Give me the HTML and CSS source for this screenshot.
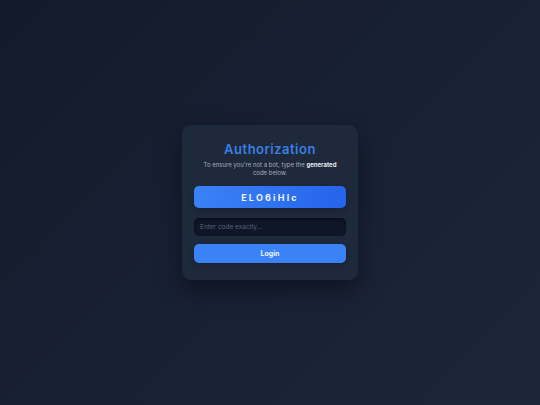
FILE: index.html
```html
<!DOCTYPE html>
<html lang="en">
<head>
<meta charset="utf-8">
<title>Authorization</title>
<link rel="stylesheet" href="styles.css">
</head>
<body>
<main class="page">
  <section class="card">
    <h1 class="title">Authorization</h1>
    <p class="subtitle">To ensure you're not a bot, type the <strong>generated</strong> code below.</p>
    <div class="code">ELO6iHlc</div>
    <input class="field" type="text" placeholder="Enter code exactly...">
    <button class="login" type="button">Login</button>
  </section>
</main>
</body>
</html>
```
FILE: styles.css
```css
* { box-sizing: border-box; }
html, body { margin: 0; height: 100%; }
body {
  background: linear-gradient(135deg, #141a2a 0%, #182034 50%, #1d2639 100%);
  font-family: Inter, "Noto Sans", sans-serif;
}
.page {
  height: 100%;
  display: flex;
  align-items: center;
  justify-content: center;
}
.card {
  width: 176px;
  padding: 16px 12px 17px;
  background: #1e293b;
  border-radius: 9px;
  box-shadow: 0 10px 22px rgba(5, 9, 18, 0.55);
  display: flex;
  flex-direction: column;
  align-items: stretch;
}
.title {
  margin: 0;
  text-align: center;
  font-size: 13px;
  line-height: 16px;
  font-weight: 600;
  letter-spacing: 0.5px;
  color: #3b7fe6;
}
.subtitle {
  margin: 4px auto 9px;
  max-width: 142px;
  text-align: center;
  font-size: 6px;
  line-height: 8px;
  color: #a3afc2;
}
.subtitle strong { color: #e2e8f0; font-weight: 700; }
.code {
  height: 22px;
  display: flex;
  align-items: center;
  justify-content: center;
  border-radius: 5px;
  background: linear-gradient(110deg, #3b82f6 0%, #2563eb 100%);
  color: #f1f5ff;
  font-size: 9px;
  font-weight: 700;
  letter-spacing: 2.2px;
  box-shadow: 0 2px 5px rgba(10, 20, 50, 0.35);
}
.field {
  margin-top: 10px;
  height: 18px;
  border: none;
  outline: none;
  border-radius: 5px;
  background: #0f1628;
  box-shadow: inset 0 1px 3px rgba(0, 0, 0, 0.5);
  padding: 0 6px;
  font-family: inherit;
  font-size: 6.5px;
  color: #cbd5e1;
}
.field::placeholder { color: #586378; }
.login {
  margin-top: 8px;
  height: 19px;
  border: none;
  border-radius: 5px;
  background: #3b82f6;
  color: #eef3ff;
  font-family: inherit;
  font-size: 7px;
  font-weight: 700;
  box-shadow: 0 2px 5px rgba(10, 20, 50, 0.35);
}
```
